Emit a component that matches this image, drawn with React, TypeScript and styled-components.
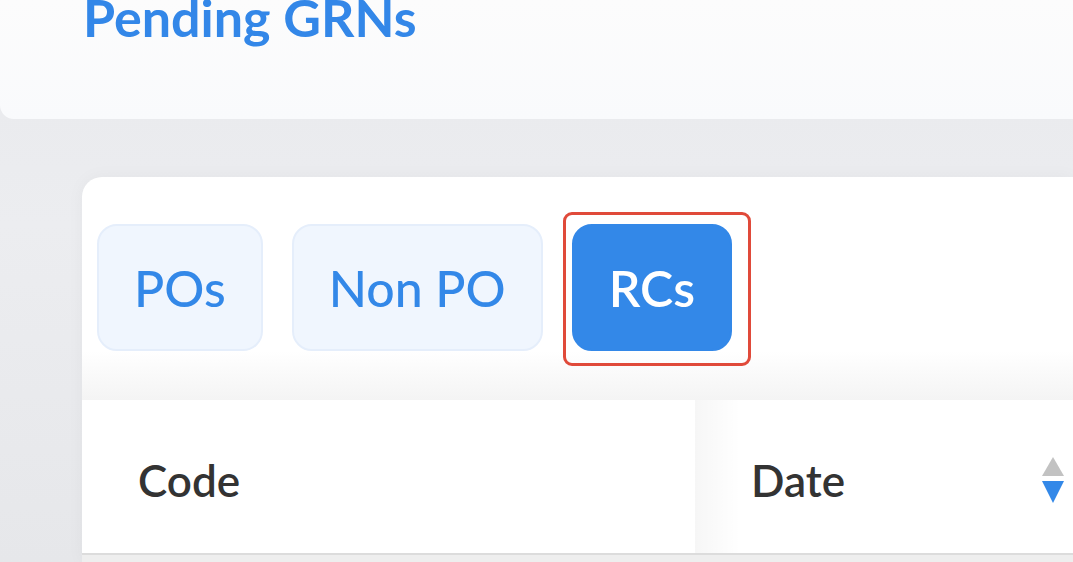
import React, { FC } from "react";
import styled, { createGlobalStyle } from "styled-components";

const GlobalStyle = createGlobalStyle`
  html, body {
    margin: 0;
    padding: 0;
    background: #e9eaed;
    font-family: Lato, "Open Sans", sans-serif;
  }
`;

const Page = styled.div`
  width: 1073px;
  height: 562px;
  overflow: hidden;
  display: flex;
  flex-direction: column;
  background: linear-gradient(180deg, #e8e9ec 0%, #ecedf0 40%, #e6e7ea 100%);
`;

const TopCard = styled.div`
  height: 119px;
  flex-shrink: 0;
  padding-left: 83px;
  box-sizing: border-box;
  background: linear-gradient(180deg, #fcfcfc 0%, #f9fafc 100%);
  border-bottom-left-radius: 14px;
  overflow: hidden;
`;

const Title = styled.h1`
  margin: -9px 0 0;
  font-size: 52px;
  line-height: 1;
  font-weight: 700;
  color: #3387e8;
  white-space: nowrap;
`;

const MainCard = styled.div`
  flex: 1;
  margin: 58px 0 0 82px;
  background: #ffffff;
  border-top-left-radius: 20px;
  box-shadow: 0 0 18px rgba(0, 0, 0, 0.04);
  display: flex;
  flex-direction: column;
  overflow: hidden;
`;

const TabRow = styled.div`
  display: flex;
  gap: 29px;
  padding: 47px 0 0 15px;
  flex-shrink: 0;
`;

const Tab = styled.button<{ $active?: boolean }>`
  height: 127px;
  padding: 0 35px;
  box-sizing: border-box;
  border-radius: 20px;
  border: 2px solid ${({ $active }) => ($active ? "#3388e8" : "#e5eefb")};
  background: ${({ $active }) => ($active ? "#3388e8" : "#f0f6fe")};
  color: ${({ $active }) => ($active ? "#ffffff" : "#3388e8")};
  font-family: Lato, "Open Sans", sans-serif;
  font-size: 50px;
  font-weight: ${({ $active }) => ($active ? 600 : 500)};
  cursor: pointer;
`;

const Highlight = styled.span`
  position: relative;
  display: flex;

  &::after {
    content: "";
    position: absolute;
    top: -12px;
    left: -9px;
    right: -19px;
    bottom: -15px;
    border: 3px solid #e04a3a;
    border-radius: 9px;
    pointer-events: none;
  }
`;

const Fade = styled.div`
  height: 49px;
  flex-shrink: 0;
  background: linear-gradient(180deg, #ffffff 0%, #f4f4f4 100%);
`;

const HeaderRow = styled.div`
  height: 153px;
  flex-shrink: 0;
  display: flex;
  background: #ffffff;
  border-bottom: 2px solid #dcdcdc;
`;

const HeaderCell = styled.div<{ $width?: number; $fixed?: boolean }>`
  position: relative;
  display: flex;
  align-items: center;
  width: ${({ $width }) => ($width ? `${$width}px` : "auto")};
  flex: ${({ $width }) => ($width ? "none" : 1)};
  padding: 6px 8px 0 56px;
  box-sizing: border-box;
  font-size: 44px;
  font-weight: 600;
  color: #333333;

  ${({ $fixed }) =>
    $fixed &&
    `
    &::after {
      content: "";
      position: absolute;
      top: 0;
      bottom: 0;
      right: -46px;
      width: 46px;
      background: linear-gradient(90deg, rgba(0,0,0,0.035), rgba(0,0,0,0));
      z-index: 1;
    }
  `}
`;

const Label = styled.span`
  flex: 1;
`;

const Rest = styled.div`
  flex: 1;
  background: #eeeeee;
`;

const SortIcon: FC = () => (
  <svg width="24" height="50" viewBox="0 0 24 50">
    <polygon points="12,2 23,21 1,21" fill="#c2c2c2" />
    <polygon points="1,26 23,26 12,48" fill="#3388e8" />
  </svg>
);

const App: FC = () => {
  return (
    <>
      <GlobalStyle />
      <Page>
        <TopCard>
          <Title>Pending GRNs</Title>
        </TopCard>
        <MainCard>
          <TabRow>
            <Tab>POs</Tab>
            <Tab>Non PO</Tab>
            <Highlight>
              <Tab $active>RCs</Tab>
            </Highlight>
          </TabRow>
          <Fade />
          <HeaderRow>
            <HeaderCell $width={613} $fixed>
              <Label>Code</Label>
            </HeaderCell>
            <HeaderCell>
              <Label>Date</Label>
              <SortIcon />
            </HeaderCell>
          </HeaderRow>
          <Rest />
        </MainCard>
      </Page>
    </>
  );
};

export default App;
